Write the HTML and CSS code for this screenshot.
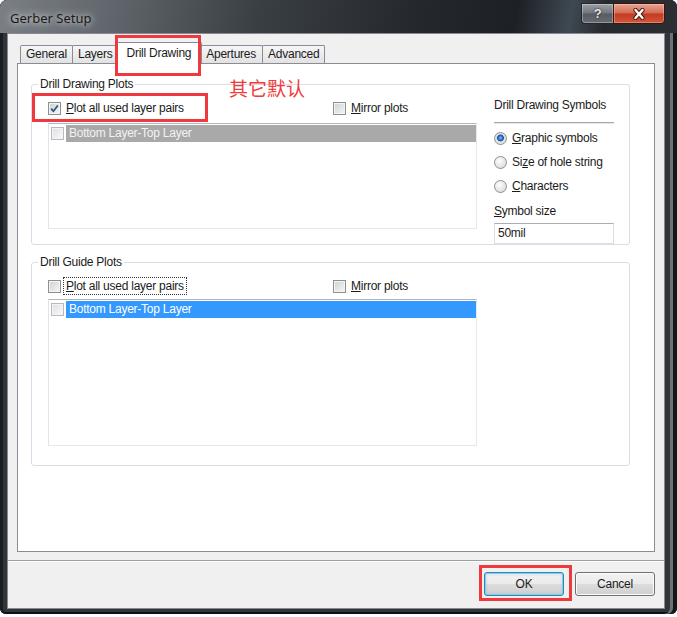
FILE: index.html
```html
<!DOCTYPE html>
<html lang="en">
<head>
    <meta charset="UTF-8">
    <meta name="viewport" content="width=device-width, initial-scale=1.0">
    <title>Gerber Setup</title>
    <link rel="stylesheet" href="styles.css">
</head>
<body>

    <div class="window">
        <!-- Title bar -->
        <div class="titlebar">
            <span class="title">Gerber Setup</span>
            <div class="caption-buttons">
                <div class="caption-btn help-btn">?</div>
                <div class="caption-btn close-btn">
                    <svg width="14" height="12" viewBox="0 0 14 12">
                        <path d="M3.5 2 L10.5 10 M10.5 2 L3.5 10" stroke="#4a150c" stroke-width="4.2" stroke-linecap="round"/>
                        <path d="M3.5 2 L10.5 10 M10.5 2 L3.5 10" stroke="#ffffff" stroke-width="2.4" stroke-linecap="round"/>
                    </svg>
                </div>
            </div>
        </div>

        <div class="client">
            <div class="tab-area">
                <div class="tabs">
                    <div class="tab">General</div>
                    <div class="tab">Layers</div>
                    <div class="tab active mark mark-tab">Drill Drawing</div>
                    <div class="tab tab-wide">Apertures</div>
                    <div class="tab">Advanced</div>
                </div>

                <div class="panel">
                    <span class="note">其它默认</span>

                    <!-- Drill Drawing Plots -->
                    <fieldset class="group">
                        <legend>Drill Drawing Plots</legend>
                        <div class="group-body">
                            <div class="plots">
                                <div class="check-row">
                                    <div class="check mark mark-plot">
                                        <span class="box">
                                            <svg width="11" height="11" viewBox="0 0 11 11">
                                                <path d="M2.2 5.6 L4.4 8.2 L8.8 2.4" fill="none" stroke="#2f4f86" stroke-width="1.7"/>
                                            </svg>
                                        </span>
                                        <span><u>P</u>lot all used layer pairs</span>
                                    </div>
                                    <div class="check">
                                        <span class="box"></span>
                                        <span><u>M</u>irror plots</span>
                                    </div>
                                </div>
                                <div class="list">
                                    <div class="list-item">
                                        <span class="box box-light"></span>
                                        <span class="item-text">Bottom Layer-Top Layer</span>
                                    </div>
                                </div>
                            </div>

                            <div class="symbols">
                                <div class="symbols-title">Drill Drawing Symbols</div>
                                <div class="symbols-rule"></div>
                                <div class="radio-row"><span class="radio selected"></span><span><u>G</u>raphic symbols</span></div>
                                <div class="radio-row"><span class="radio"></span><span>Si<u>z</u>e of hole string</span></div>
                                <div class="radio-row"><span class="radio"></span><span><u>C</u>haracters</span></div>
                                <div class="size-label"><u>S</u>ymbol size</div>
                                <div class="text-input">50mil</div>
                            </div>
                        </div>
                    </fieldset>

                    <!-- Drill Guide Plots -->
                    <fieldset class="group group-guide">
                        <legend>Drill Guide Plots</legend>
                        <div class="group-body">
                            <div class="plots">
                                <div class="check-row">
                                    <div class="check">
                                        <span class="box"></span>
                                        <span class="focus"><u>P</u>lot all used layer pairs</span>
                                    </div>
                                    <div class="check">
                                        <span class="box"></span>
                                        <span><u>M</u>irror plots</span>
                                    </div>
                                </div>
                                <div class="list list-guide">
                                    <div class="list-item">
                                        <span class="box box-light"></span>
                                        <span class="item-text selected">Bottom Layer-Top Layer</span>
                                    </div>
                                </div>
                            </div>
                        </div>
                    </fieldset>
                </div>
            </div>

            <div class="footer">
                <button class="btn btn-default mark mark-ok">OK</button>
                <button class="btn">Cancel</button>
            </div>
        </div>
    </div>

</body>
</html>
```

FILE: styles.css
```css
body {
    margin: 0;
    background: #ffffff;
    font-family: 'Liberation Sans', Arial, sans-serif;
    font-size: 12px;
    letter-spacing: -0.25px;
    color: #1b1b1b;
}

/* Window frame */
.window {
    width: 677px;
    height: 614px;
    box-sizing: border-box;
    padding: 0 12px 5px 7px;
    display: flex;
    flex-direction: column;
    background: #30353a;
    border-radius: 7px 7px 6px 6px;
    box-shadow: inset -4px 0 #15181b, inset -7px 0 #6c7176, inset 3px 0 #1b1e21, inset 0 -2px #0d0f11;
}

.titlebar {
    height: 33px;
    margin: 0 -12px 0 -7px;
    padding: 0 12px 0 10px;
    display: flex;
    justify-content: space-between;
    align-items: flex-start;
    border-radius: 7px 7px 0 0;
    background: linear-gradient(100deg, #7a7f85 0%, #62676d 16%, #3a3f44 38%, #24282c 62%, #1d2125 76%, #3f4952 84%, #262a2f 89%, #2b2f34 100%);
}

.title {
    margin-top: 9px;
    font-family: 'Noto Sans', sans-serif;
    font-size: 13px;
    line-height: 18px;
    letter-spacing: 0;
    color: #1a1a1a;
    text-shadow: 0 0 6px rgba(255, 255, 255, 0.8), 0 0 12px rgba(255, 255, 255, 0.5);
}

.caption-buttons {
    display: flex;
    margin-top: 3px;
}

.caption-btn {
    height: 21px;
    box-sizing: border-box;
    display: flex;
    align-items: center;
    justify-content: center;
}

.help-btn {
    width: 32px;
    border: 1px solid #24282c;
    border-right: none;
    border-radius: 0 0 0 4px;
    background: linear-gradient(#9ba0a6, #72777d 48%, #575c62 52%, #686d73);
    box-shadow: inset 0 0 0 1px rgba(255, 255, 255, 0.3);
    color: #e8e8e8;
    font: bold 13px 'Liberation Sans', sans-serif;
    text-shadow: 0 0 2px #000000;
}

.close-btn {
    width: 52px;
    border: 1px solid #3b140d;
    border-radius: 0 0 4px 0;
    background: linear-gradient(#e8a593, #d36a52 48%, #c13a20 52%, #d0593c);
    box-shadow: inset 0 0 0 1px rgba(255, 220, 200, 0.35);
}

/* Client area */
.client {
    flex: 1;
    display: flex;
    flex-direction: column;
    border: 1px solid #868b91;
    background: #f0f0f0;
}

.tab-area {
    padding: 8px 9px 0;
}

.tabs {
    display: flex;
    align-items: flex-end;
    height: 21px;
    padding-left: 4px;
}

.tab {
    height: 18px;
    box-sizing: border-box;
    padding: 0 5px;
    margin-left: -1px;
    border: 1px solid #898c95;
    border-bottom: none;
    border-radius: 2px 2px 0 0;
    background: linear-gradient(#f6f6f6, #e2e2e2);
    line-height: 17px;
    white-space: nowrap;
}

.tab-wide {
    padding: 0 6px;
}

.tab.active {
    height: 22px;
    margin: 0 -2px -1px -3px;
    padding: 0 10px;
    background: #ffffff;
    line-height: 20px;
    z-index: 1;
}

.panel {
    position: relative;
    height: 489px;
    box-sizing: border-box;
    border: 1px solid #898c95;
    background: #ffffff;
    padding: 13px 24px 0 13px;
}

.note {
    position: absolute;
    left: 211px;
    top: 14px;
    font-family: 'Noto Sans CJK SC', sans-serif;
    font-size: 19px;
    line-height: 20px;
    letter-spacing: 0;
    color: #ef3b3b;
}

/* Group boxes */
.group {
    margin: 0;
    padding: 0;
    min-width: 0;
    border: 1px solid #d5dfe5;
    border-radius: 3px;
}

.group legend {
    margin-left: 6px;
    padding: 0 2px;
    line-height: 14px;
}

.group-guide {
    margin-top: 10px;
}

.group-body {
    display: flex;
    gap: 17px;
    padding: 5px 15px 0 16px;
}

.plots {
    width: 429px;
    padding-bottom: 15px;
}

.group-guide .plots {
    padding-bottom: 19px;
}

.check-row {
    display: grid;
    grid-template-columns: 285px 1fr;
    height: 24px;
    align-items: center;
}

.check {
    display: flex;
    align-items: center;
    gap: 5px;
    height: 24px;
    justify-self: start;
    white-space: nowrap;
}

.focus {
    margin-left: -2px;
    padding: 1px 2px;
    outline: 1px dotted #333333;
    line-height: 14px;
}

.box {
    width: 13px;
    height: 13px;
    box-sizing: border-box;
    flex: none;
    display: flex;
    align-items: center;
    justify-content: center;
    border: 1px solid #8e8f8f;
    background: linear-gradient(135deg, #cdd0d4, #f7f7f7);
    box-shadow: inset 0 0 0 1px #f4f4f4;
}

.box-light {
    border-color: #b8b9ba;
    background: linear-gradient(135deg, #dcdee0, #fafafa);
}

/* List boxes */
.list {
    margin-top: 3px;
    height: 106px;
    box-sizing: border-box;
    padding-top: 1px;
    border: 1px solid;
    border-color: #b3b5ba #e3e9ef #e3e9ef #e2e3ea;
}

.list-guide {
    margin-top: 1px;
    height: 147px;
}

.list-item {
    display: flex;
    align-items: center;
    gap: 2px;
    height: 17px;
    padding-left: 2px;
}

.item-text {
    flex: 1;
    line-height: 17px;
    padding-left: 3px;
    background: #a9a9a9;
    color: #f3f3f3;
    white-space: nowrap;
}

.item-text.selected {
    background: #3399ff;
    color: #ffffff;
}

/* Drill drawing symbols */
.symbols {
    width: 120px;
    display: flex;
    flex-direction: column;
}

.symbols-title {
    margin-top: 2px;
    line-height: 14px;
    white-space: nowrap;
}

.symbols-rule {
    height: 1px;
    margin: 10px 0 2px;
    background: #a8a8a8;
    border-bottom: 1px solid #e6e6e6;
}

.radio-row {
    display: flex;
    align-items: center;
    gap: 5px;
    height: 24px;
    white-space: nowrap;
}

.radio {
    width: 13px;
    height: 13px;
    box-sizing: border-box;
    flex: none;
    border: 1px solid #8e8f8f;
    border-radius: 50%;
    background: radial-gradient(circle at 40% 35%, #fdfdfd, #d2d4d7);
}

.radio.selected {
    background: radial-gradient(circle at 50% 45%, #86c8f8 0, #2f7bd0 1.8px, #1a4e98 3px, #d8dce1 3.8px, #f3f3f3 100%);
}

.size-label {
    margin-top: 6px;
    line-height: 14px;
}

.text-input {
    margin-top: 5px;
    height: 21px;
    box-sizing: border-box;
    padding-left: 3px;
    border: 1px solid #dbdfe6;
    border-top-color: #abadb3;
    background: #ffffff;
    line-height: 19px;
}

/* Dialog buttons */
.footer {
    margin-top: 8px;
    padding: 11px 9px 12px;
    display: flex;
    justify-content: flex-end;
    gap: 11px;
    border-top: 1px solid #a0a0a0;
    box-shadow: inset 0 1px #ffffff;
}

.btn {
    width: 80px;
    height: 24px;
    padding: 0;
    border: 1px solid #707070;
    border-radius: 3px;
    background: linear-gradient(#f2f2f2 0%, #ebebeb 49%, #dddddd 50%, #cfcfcf 100%);
    box-shadow: inset 0 0 0 1px #fbfbfb;
    font-family: 'Liberation Sans', Arial, sans-serif;
    font-size: 12px;
    letter-spacing: -0.25px;
    color: #1b1b1b;
}

.btn-default {
    border-color: #3c7fb1;
    box-shadow: inset 0 0 0 1px #7ed0f3, inset 0 0 3px 1px rgba(80, 190, 240, 0.35);
}

/* Red annotation boxes */
.mark {
    position: relative;
}

.mark::after {
    content: '';
    position: absolute;
    border: 3px solid #ee3a3e;
    pointer-events: none;
}

.mark-tab::after {
    left: -1px;
    right: 0;
    top: -8px;
    bottom: -12px;
}

.mark-plot::after {
    left: -16px;
    right: -24px;
    top: -3px;
    bottom: -2px;
}

.mark-ok::after {
    left: -6px;
    right: -9px;
    top: -8px;
    bottom: -6px;
}
```
